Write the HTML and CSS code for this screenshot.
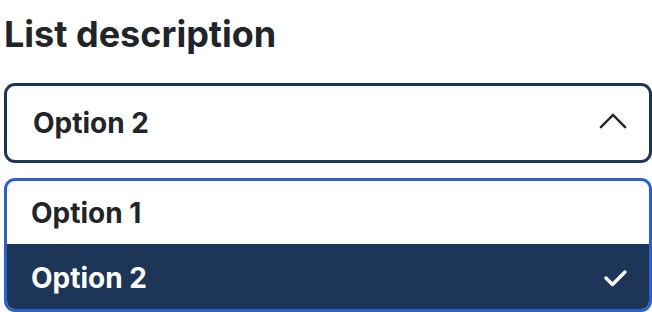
FILE: index.html
```html
<!DOCTYPE html>
<html lang="en">
<head>
<meta charset="utf-8">
<title>List description</title>
<link rel="stylesheet" href="styles.css">
</head>
<body>
<div class="field">
  <h2 class="label">List description</h2>
  <button class="select" type="button" aria-expanded="true">
    <span class="select-value">Option 2</span>
    <svg class="chevron" width="28" height="16" viewBox="0 0 28 16" aria-hidden="true">
      <path d="M2 14 L14 2 L26 14" fill="none" stroke="currentColor" stroke-width="2.4" stroke-linecap="square" stroke-linejoin="miter"/>
    </svg>
  </button>
  <ul class="listbox" role="listbox">
    <li class="option" role="option">Option 1</li>
    <li class="option selected" role="option" aria-selected="true">
      <span>Option 2</span>
      <svg class="check" width="26" height="22" viewBox="0 0 26 22" aria-hidden="true">
        <path d="M3 11 L9.5 17.5 L22 5" fill="none" stroke="currentColor" stroke-width="3.4" stroke-linecap="round" stroke-linejoin="round"/>
      </svg>
    </li>
  </ul>
</div>
</body>
</html>
```
FILE: styles.css
```css
html, body {
  margin: 0;
  padding: 0;
  background: #ffffff;
}
body {
  font-family: Inter, "Noto Sans", "Liberation Sans", sans-serif;
  color: #212529;
  overflow: hidden;
}
.field {
  padding: 12px 0 0 4px;
  width: 648px;
}
.label {
  margin: 0;
  font-size: 36px;
  line-height: 44px;
  font-weight: 700;
  color: #212529;
}
.select {
  margin-top: 27px;
  box-sizing: border-box;
  width: 648px;
  height: 80px;
  display: flex;
  align-items: center;
  justify-content: space-between;
  padding: 0 22px 0 26px;
  border: 3px solid #1d3557;
  border-radius: 11px;
  background: #ffffff;
  font: inherit;
  color: #212529;
  text-align: left;
}
.select-value {
  font-size: 28px;
  font-weight: 700;
}
.chevron {
  color: #212529;
  margin-bottom: 4px;
}
.listbox {
  list-style: none;
  margin: 15px 0 0 0;
  padding: 0;
  box-sizing: border-box;
  width: 648px;
  border: 3px solid #2a63c7;
  border-radius: 11px;
  overflow: hidden;
}
.option {
  height: 63px;
  display: flex;
  align-items: center;
  justify-content: space-between;
  padding: 0 20px 0 24px;
  font-size: 28px;
  font-weight: 700;
  color: #212529;
}
.option.selected {
  background: #1d3557;
  color: #ffffff;
  padding-top: 2px;
}
.check {
  color: #ffffff;
}
```
